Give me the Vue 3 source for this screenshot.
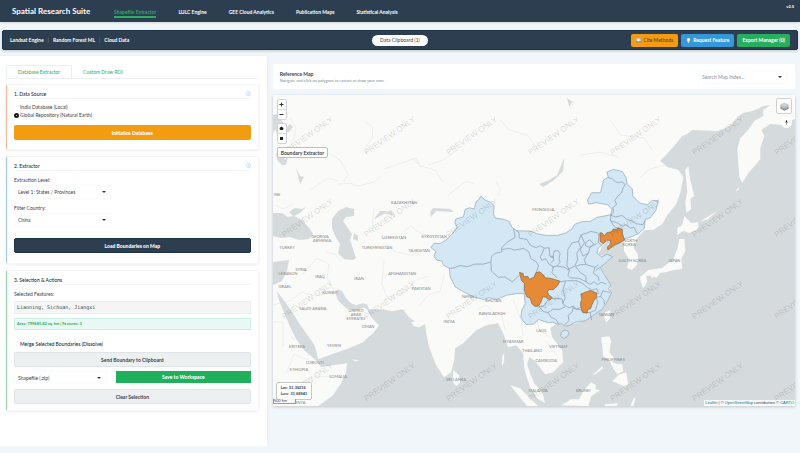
<script setup>
import { ref } from 'vue'

const navItems = ['Shapefile Extractor', 'LULC Engine', 'GEE Cloud Analytics', 'Publication Maps', 'Statistical Analysis']
const engines = ['Landsat Engine', 'Random Forest ML', 'Cloud Data']
const source = ref('global')
const merge = ref(false)

const marks = []
for (let row = 0; row < 4; row++) {
  for (let col = 0; col < 7; col++) {
    marks.push({ x: 309 + col * 82, y: 138 + row * 82 })
  }
}

const countries = [
  ['INE', 277, 196], ['KAZAKHSTAN', 404, 204], ['GEORGIA', 320, 238], ['ARMENIA', 322, 242],
  ['TURKEY', 287, 249], ['UZBEKISTAN', 394, 239], ['KYRGYZSTAN', 434, 238], ['TURKMENISTAN', 377, 249],
  ['TAJIKISTAN', 419, 252], ['SYRIA', 301, 271], ['LEBANON', 288, 275], ['IRAQ', 320, 278],
  ['IRAN', 359, 280], ['AFGHANISTAN', 402, 275], ['PAKISTAN', 421, 290], ['ISRAEL', 285, 288],
  ['KUWAIT', 330, 294], ['SAUDI ARABIA', 313, 310], ['UNITED', 356, 312], ['ARAB', 356, 316],
  ['EMIRATES', 356, 320], ['OMAN', 368, 328], ['YEMEN', 334, 347], ['ERITREA', 297, 348],
  ['DJIBOUTI', 315, 364], ['ETHIOPIA', 299, 371], ['SOMALIA', 338, 378], ['KENYA', 299, 404],
  ['INDIA', 449, 323], ['SRI LANKA', 456, 381], ['NEPAL', 468, 298], ['BHUTAN', 493, 302],
  ['BANGLADESH', 492, 315], ['MYANMAR', 513, 343], ['LAOS', 541, 332], ['THAILAND', 532, 352],
  ['VIETNAM', 558, 348], ['CAMBODIA', 546, 362], ['MALAYSIA', 538, 392], ['BRUNEI', 583, 392],
  ['PHILIPPINES', 613, 361], ['TAIWAN', 606, 316], ['MONGOLIA', 543, 211], ['NORTH', 630, 242],
  ['KOREA', 629, 246], ['SOUTH KOREA', 632, 262], ['JAPAN', 674, 262]
]
</script>

<template>
  <div class="page">
    <header class="nav">
      <h1>Spatial Research Suite</h1>
      <nav>
        <a v-for="(item, i) in navItems" :key="item" href="#" :class="{ active: i === 0 }">{{ item }}</a>
      </nav>
      <span class="version">v2.5</span>
    </header>

    <section class="toolbar">
      <div class="engines">
        <template v-for="(e, i) in engines" :key="e">
          <i v-if="i">|</i><span>{{ e }}</span>
        </template>
      </div>
      <button class="pill">Data Clipboard (1)</button>
      <div class="tools">
        <button class="btn cite">
          <svg viewBox="0 0 12 10"><path d="M0 1h5l1 1 1-1h5v8H7L6 10 5 9H0z" fill="#5b86a8" /><path d="M1 0h4l1 1v7L5 7H1zM11 0H7L6 1v7l1-1h4z" fill="#edf2f5" /><path d="M2 2h2M2 4h2M8 2h2M8 4h2" stroke="#9ab" /></svg>
          Cite Methods
        </button>
        <button class="btn request">
          <svg viewBox="0 0 10 12"><path d="M5 0a4 4 0 0 0-4 4c0 2 2 3 2 5h4c0-2 2-3 2-5a4 4 0 0 0-4-4z" fill="#fff3b0" /><path d="M3 9h4v2H6v1H4v-1H3z" fill="#dde3e8" /></svg>
          Request Feature
        </button>
        <button class="btn green">Export Manager (0)</button>
      </div>
    </section>

    <main>
      <aside>
        <div class="tabs">
          <button class="on">Database Extractor</button>
          <button>Custom Draw ROI</button>
        </div>

        <section class="card orange">
          <h2>1. Data Source
            <svg class="info" viewBox="0 0 10 10"><circle cx="5" cy="5" r="4" /><path d="M5 4.400v3M5 2.300v1" /></svg>
          </h2>
          <label class="check"><input v-model="source" type="radio" name="source" value="india">India Database (Local)</label>
          <label class="check"><input v-model="source" type="radio" name="source" value="global">Global Repository (Natural Earth)</label>
          <button class="wide init">Initialize Database</button>
        </section>

        <section class="card blue">
          <h2>2. Extractor
            <svg class="info" viewBox="0 0 10 10"><circle cx="5" cy="5" r="4" /><path d="M5 4.400v3M5 2.300v1" /></svg>
          </h2>
          <label class="field" for="level">Extraction Level:</label>
          <div class="select"><select id="level"><option>Level 1: States / Provinces</option></select></div>
          <label class="field" for="country">Filter Country:</label>
          <div class="select"><select id="country"><option>China</option></select></div>
          <button class="wide load">Load Boundaries on Map</button>
        </section>

        <section class="card mint">
          <h2>3. Selection &amp; Actions</h2>
          <div class="field">Selected Features:</div>
          <pre>Liaoning, Sichuan, Jiangxi</pre>
          <p class="area">Area: 799685.82 sq. km | Features: 3</p>
          <label class="check merge"><input v-model="merge" type="checkbox">Merge Selected Boundaries (Dissolve)</label>
          <button class="wide grey">Send Boundary to Clipboard</button>
          <div class="save-row">
            <div class="select"><select aria-label="Format"><option>Shapefile (.zip)</option></select></div>
            <button class="save">Save to Workspace</button>
          </div>
          <button class="wide grey clear">Clear Selection</button>
        </section>
      </aside>

      <section class="map-col">
        <div class="map-head">
          <div>
            <h3>Reference Map</h3>
            <p>Navigate and click on polygons to extract or draw your own.</p>
          </div>
          <div class="select search"><select aria-label="Map index"><option>Search Map Index...</option></select></div>
        </div>

        <div class="map">
          <svg class="canvas" viewBox="273 95 522 311">
            <rect x="273" y="95" width="522" height="311" fill="#fafaf9" />

            <g class="rivers">
              <path d="M365 121l8 7-1 10-7 10 2 6M320 155l9-2 11 7 8 14-4 8M338 184l12-1 8 3 16-4 7-6M384 169l12-4 20-7 4 7M428 165l15-5 14-10M411 158l10 8 14 4 8 12M566 99l8 3-4 7M290 118l6 10-3 12 8 7M275 205l8 4 10-5M500 120l8 9 20 7 10 14M610 120l10 15 24 3 8 12M580 155l20-3 18 5M640 177l10-8 14-4M448 195l18-14 8 3M496 181l4 8-2 7M310 190l18-12 10 3" />
              <path d="M273 305l18-5 11-8 14 4 20-5M302 275l15-17 12 6-2 14 8 14M327 252l8 2 6 8M384 260l-2 24 5 13 18-5 11-12 12-4M383 243l13 9 15 3 12-5M400 235l10-9 12 8 14 2M372 229l2-21M305 343l-14-6M273 322h10v24M286 373l8-19 20 8M298 385l12-8 20-1M420 305l8-10 12-4 4-16M452 278l16 12 18 5M478 309l8-4 8 8M505 330l-4-16M513 300l8 20 2 16M535 313l4 16 12 9M545 340l10 14" />
            </g>

            <path class="water" d="M318 406L333 395 341 383 346 372 347 363 333 365 321 367 316 360 304 350 299 343 293 333 286 317 279 300 277 291 283 299 291 310 299 323 309 337 314 344 316 350 318 359 329 355 349 348 363 342 367 338 373 333 379 325 371 317 367 309 364 307 356 311 346 308 338 300 335 292 338 289 342 291 346 298 351 303 356 305 362 303 367 304 369 309 383 309 392 311 403 309 409 317 415 321 411 322 414 326 419 327 425 324 426 332 429 347 436 365 444 377 451 372 454 360 455 348 463 343 470 336 476 330 486 325 498 323 503 333 508 347 516 345 523 353 524 367 526 375 530 387 537 398 545 403 542 392 534 383 530 373 527 364 529 357 534 360 538 365 545 374 553 372 563 362 562 350 552 337 550 328 557 323 565 325 580 322 593 315 603 307 610 294 610 286 605 275 600 267 612 257 598 255 602 246 608 240 608 250 623 238 624 247 630 257 627 268 634 268 638 260 637 253 633 248 637 238 644 230 653 230 662 224 667 215 676 204 680 193 683 177 678 170 667 167 660 161 673 147 682 136 687 134 692 130 717 131 730 126 737 117 743 113 752 111 757 109 763 106 770 105 763 110 763 116 754 121 747 131 740 138 737 149 738 163 739 177 742 183 748 173 757 163 760 159 760 148 764 136 761 130 770 124 783 125 788 121 795 119 795 406Z" />
            <g class="water">
              <path d="M273 213l9 0 6 4 5-1-4-4 6-4 7 1 4-2-6 6-6 3 8 4 8 9 3 5-4 5-10 1-9-3-9 1-8-2z" />
              <path d="M332 219l6-8 8-4 8 2 0 7-8 1-3 4 6 9 3 4-2 6 3 9 3 9-3 2-9-1-6-6 2-9-5-8-3-8z" />
              <path d="M354 233l4 3 0 5-5-2zM273 262l16-2-2 11-5 10-9 4zM273 115l5-1 8 14 4-4 3 3-4 5-6 1 1 8-5-2-4-10-4 8zM276 153l8 1 0 6 4-3-2 8-4 0-5-5zM430 212l3-4 18 1 2 3-17-1-5 6zM539 184l10-4 8-5 7-17-1 13-9 9-11 7zM374 219l6-8 8 0-8 5zM567 98l5 4-3 5z" />
              <path d="M296 168l4 8 4 1-4 7zM384 214l10 1-3-5z" />
            </g>

            <g class="land">
              <path d="M453 370l6 5 1 7-4 4-3-4zM510 385l10 3 9 9 9 9h-11l-9-11zM561 405l10-6 8 0 4-8 8-9 5 3-1 4 5 1-9 6-3 10zM601 337l8-1 2 5-2 11 6 7-4 2-8-5-1-10zM609 360l8 4 5 0 1 7-6 3-4-6-2-4zM612 381l7-7 7-2 2 12-4 2-7-3zM602 366l-10 9 3-1 8-6zM605 312l5-2 0 8-4 4-2-4zM605 404l13-1-2 3h-12zM630 406l4-9 1 2-2 7zM502 356l2-3 0 9-2 4zM352 359l7 1-4 1z" />
              <path d="M685 170l3-4 2 14 4 16-4 3 1 10-5 4-1-11 2-10zM684 216l7 7 7-1 0 7-9 4-6-2-6 4 0-7 5-3zM679 239l5 0 1 12-4 8 1 10-8 1-8 2-6 1-4 5-4-3-12 2 8-7 14-2 6-5 5-3 4-11zM650 275l6-1-4 4zM640 276l6-1 1 7-4 6-3-8zM699 222l8-5 10-6-9 8zM735 191l4-4-1 3z" />
            </g>

            <g class="land" transform="translate(420 160) scale(.3333)">
              <path d="M612 240l35 0-8 22 15 25-4 28-15 15-14-6 6-25-16-28z" />
            </g>
            <g class="china" transform="translate(420 160) scale(.3333)">
              <path class="province" d="M32 262L42 250 61 250 80 238 98 220 111 202 104 187 107 177 130 170 135 148 148 143 162 147 168 125 176 119 182 108 195 120 214 128 222 138 220 162 226 174 252 178 267 184 276 202 290 212 331 213 350 221 378 226 412 226 436 219 455 207 463 193 488 184 510 184 530 172 572 164 575 148 562 134 545 131 530 128 505 132 502 120 514 98 541 98 550 60 564 51 560 36 580 28 607 35 618 54 621 72 636 86 638 108 658 129 682 134 696 121 714 122 707 151 689 174 675 178 672 205 655 220 639 228 612 237 600 248 585 255 563 269 570 252 559 243 548 252 535 263 530 279 545 291 560 282 577 290 560 305 540 322 552 343 572 375 565 385 574 398 558 430 545 448 520 465 495 482 465 486 450 495 435 498 425 491 410 492 398 486 385 488 355 478 340 492 318 493 307 480 302 470 305 450 315 430 312 400 290 400 275 403 260 405 230 418 205 413 190 418 160 410 130 395 105 380 90 350 88 325 70 315 65 303 50 300 42 290 47 274Z" />
              <path class="province" d="M432 510l9 1 6 8-7 12-11 4-8-8 3-11z" />
              <path class="border" d="M280 205L285 232 260 247 244 264 246 275 224 280 214 290 212 306 190 312 165 312 140 320 120 316 103 323 88 325M212 306L214 333 235 352 254 350 276 365 299 345M246 268L268 265 284 270 310 265 326 275 332 295 350 307 355 317 349 336M287 211L297 218 297 234 320 238 330 255 348 263 359 257 372 264 366 280 360 290 365 301 377 296 386 312 400 320 395 338 411 353M372 264L387 263 389 288 399 289 401 301 391 308M396 321L410 318 420 306 416 295 420 281 413 271 402 273 398 292 390 291M410 318L432 321 448 331 440 316 442 292 443 268 456 248 475 244 483 224 500 219 512 214 531 218 536 225 534 247 545 255M475 244L481 262 470 279 472 298 464 318 442 329M531 250L510 260 505 279 488 288 480 268 493 248 482 224M498 246L508 239 521 252 508 262 495 256ZM505 279L492 298 497 313 524 322 535 314M497 313L480 314 466 319 481 338 497 348 498 365 510 373 521 365 532 374 542 366 558 372M524 322L520 339 535 350 536 362M540 322L527 330M448 331L443 346 451 353 478 355 489 361 498 365M418 365L442 362 470 362 487 370 503 383 515 390 530 386M436 364L428 390 435 414 427 430M395 415L425 416 430 434 447 443 460 438 468 448 484 441M384 418L371 438 357 440 370 455 384 457 398 447 416 448 435 440M384 457L392 471 407 478 416 492M460 438L456 456 444 465 446 482 434 494M460 445L484 449 488 458 510 457 514 480M510 457L526 450 533 425 527 412 541 409 548 392 569 397M541 409L552 421 552 433M531 386L535 402M572 162L571 182 590 188 608 198 617 194 630 204 641 202 651 220M571 165L586 171 605 166 619 177 638 184 648 191 668 194 674 182M563 52L577 57 588 67 605 66 615 73 609 84 603 99 591 110 584 121 589 133 578 143 580 157 571 165M571 182L582 199 593 205" />
              <path class="selected" d="M298 337L309 340 310 350 323 349 328 358 342 351 347 338 358 335 370 345 375 353 393 355 419 363 412 377 399 389 387 388 382 394 385 404 396 412 389 420 375 411 367 410 364 423 355 438 345 439 335 431 330 414 320 410 312 390 313 370 304 361Z" />
              <path class="selected" d="M482 402L494 397 502 394 510 391 522 396 530 399 528 413 520 423 514 437 511 446 502 448 501 459 487 456 482 440 481 428 485 418Z" />
              <path class="selected" d="M539 218L546 219 552 228 560 218 574 215 579 207 590 209 593 203 606 208 607 222 613 239 596 249 585 253 563 269 562 261 572 250 570 241 560 240 550 250 540 244Z" />
            </g>
            <text v-for="c in countries" :key="c[0]" class="country" :x="c[1]" :y="c[2]">{{ c[0] }}</text>
            <text v-for="(m, i) in marks" :key="i" class="mark" :transform="`translate(${m.x} ${m.y}) rotate(-35)`">PREVIEW ONLY</text>
          </svg>

          <div class="controls">
            <div class="stack">
              <button aria-label="Zoom in"><svg viewBox="0 0 10 10"><path d="M5 1v8M1 5h8" stroke="#333" stroke-width="2" /></svg></button>
              <button aria-label="Zoom out"><svg viewBox="0 0 10 10"><path d="M1 5h8" stroke="#333" stroke-width="2" /></svg></button>
            </div>
            <div class="stack">
              <button aria-label="Draw polygon"><svg viewBox="0 0 10 10"><path d="M5 1l4 3-1 4H2L1 4z" fill="#222" /></svg></button>
              <button aria-label="Draw rectangle"><svg viewBox="0 0 10 10"><path d="M2 2h6v6H2z" fill="#222" /></svg></button>
            </div>
            <button class="tag">Boundary Extractor</button>
          </div>
          <div class="corner">
            <button class="layers" aria-label="Layers"><svg viewBox="0 0 26 26"><path d="M1 16l12 6 12-6v3l-12 6-12-6z" fill="#777" /><path d="M1 12l12 6 12-6v4l-12 6-12-6z" fill="#999" /><path d="M1 8l12-6 12 6v4l-12 6-12-6z" fill="#b8b8b8" /><path d="M1 8l12-6 12 6-12 6z" fill="#d0d0d0" /></svg></button>
            <div class="compass"><svg viewBox="0 0 10 10"><path d="M5 1l1.500 4h-3z" fill="#222" /><path d="M5 9L3.500 5h3z" fill="#999" /></svg></div>
          </div>
          <div class="coords">Lat: 51.36216<br>Lon: 31.68941</div>
          <div class="scale">500 km</div>
          <div class="credit"><a href="#">Leaflet</a> | © <a href="#">OpenStreetMap</a> contributors © <a href="#">CARTO</a></div>
        </div>
      </section>
    </main>
  </div>
</template>

<style>
body {
  background: #f1f6fa;
}
</style>

<style scoped>
* {
  box-sizing: border-box;
}
.page {
  font-family: Lato, "Liberation Sans", sans-serif;
  font-size: 5px;
  line-height: 8px;
  color: #3b4248;
}
h1, h2, h3, p, pre {
  margin: 0;
}
button, select, input {
  font: inherit;
  color: inherit;
  margin: 0;
  padding: 0;
  border: 0;
  background: none;
}
svg {
  display: block;
}
.nav {
  display: flex;
  align-items: center;
  height: 22px;
  padding: 0 6px 0 12px;
  background: #2c3e50;
  color: #fff;
  box-shadow: 0 1px 2px #0002;
}
h1 {
  font-size: 8px;
  font-weight: 700;
  flex: 0 0 102px;
}
nav {
  display: flex;
  flex: 1;
  gap: 22px;
}
nav a {
  color: #fff;
  font-weight: 700;
  text-decoration: none;
  padding-top: 3px;
  border-bottom: 2px solid transparent;
}
nav a.active {
  color: #27ae60;
  border-color: #27ae60;
}
.version {
  font-size: 4px;
  font-weight: 900;
  align-self: flex-start;
  padding-top: 3px;
}
.toolbar {
  display: grid;
  grid-template-columns: 1fr auto 1fr;
  align-items: center;
  height: 20px;
  margin: 8px 2px 6px;
  padding: 0 7px;
  border: 1px solid #1d3347;
  border-radius: 2px;
  background: #2c3e50;
  color: #fff;
  box-shadow: 0 1px 3px #0003;
}
.engines {
  display: flex;
  gap: 4px;
  font-weight: 700;
}
.engines i {
  font-style: normal;
  font-weight: 400;
  color: #8795a3;
}
.pill {
  height: 11px;
  padding: 0 8px;
  border-radius: 6px;
  background: #fff;
  color: #3b4248;
}
.tools {
  display: flex;
  justify-content: flex-end;
  gap: 3px;
}
.btn {
  display: flex;
  align-items: center;
  justify-content: center;
  gap: 2px;
  height: 13px;
  padding: 0 5px;
  border-radius: 2px;
  font-weight: 700;
}
.btn svg {
  width: 5px;
  height: 5px;
}
.cite {
  background: #f39c12;
  color: #4b4230;
  font-weight: 400;
}
.request {
  background: #3498db;
}
.green {
  background: #27ae60;
}
main {
  display: grid;
  grid-template-columns: 1fr 2fr;
  align-items: start;
}
aside {
  background: #fff;
  padding: 9px 8px 35px 6px;
  box-shadow: 1px 0 3px #0000000a;
}
.tabs {
  display: flex;
  margin: 0 2px 5px 0;
  border-bottom: 1px solid #eceff1;
}
.tabs button {
  height: 13px;
  padding: 0 11px;
  color: #27ae60;
}
.tabs .on {
  border: 1px solid #eceff1;
  border-bottom: 0;
  border-radius: 2px 2px 0 0;
}
.card {
  padding: 4px 7px 9px;
  border: 1px solid #f3f5f6;
  border-left: 1px solid;
  border-radius: 2px;
  box-shadow: 0 1px 3px #0001;
  margin-bottom: 6px;
}
.card.orange {
  border-left-color: #f8b787;
}
.card.blue {
  border-left-color: #9cc9ee;
  padding-bottom: 10px;
}
.card.mint {
  border-left-color: #8fd5ab;
  margin-bottom: 0;
  padding-bottom: 6px;
}
h2 {
  display: flex;
  justify-content: space-between;
  align-items: center;
  font-size: 5px;
  font-weight: 500;
  color: #23292e;
  height: 10px;
  border-bottom: 1px solid #f3f5f6;
  margin-bottom: 4px;
}
.info {
  width: 5px;
  height: 5px;
  fill: none;
  stroke: #8fc1e8;
}
.check {
  display: flex;
  align-items: center;
  gap: 1px;
}
.check input {
  appearance: none;
  width: 5px;
  height: 5px;
  border-radius: 50%;
}
.check input:checked {
  border: 2px solid #1a1a1a;
}
.wide {
  display: block;
  width: 100%;
  height: 15px;
  border-radius: 2px;
  font-weight: 900;
}
.init {
  margin-top: 6px;
  background: #f39c12;
  color: #fff;
}
.load {
  margin-top: 11px;
  border: 1px solid #1d3347;
  background: #2c3e50;
  color: #fff;
}
.field {
  display: block;
  line-height: 10px;
}
.select {
  position: relative;
  width: 98px;
  border: 1px solid #fafbfb;
  margin-bottom: 4px;
}
.select select {
  display: block;
  appearance: none;
  width: 100%;
  height: 12px;
  padding: 0 3px;
}
.select::after {
  content: "";
  position: absolute;
  right: 5px;
  top: 5px;
  border: 2px solid transparent;
  border-top-color: #333;
  border-bottom: 0;
  pointer-events: none;
}
pre {
  font: 5px/11px "DejaVu Sans Mono", monospace;
  height: 13px;
  margin-top: 2px;
  padding: 0 2px;
  border: 1px solid #eceeef;
  background: #f5f5f5;
}
.area {
  margin: 4px 0 10px;
  height: 12px;
  padding: 0 2px;
  border: 1px solid #cdeee3;
  background: #e8f8f5;
  color: #27ae60;
  font-size: 4px;
  line-height: 10px;
  font-weight: 700;
}
.merge {
  margin-bottom: 4px;
  font-weight: 500;
  color: #23292e;
}
.grey {
  border: 1px solid #dfe4e6;
  background: #ecf0f1;
  font-weight: 700;
}
.save-row {
  display: grid;
  grid-template-columns: 93px 1fr;
  gap: 9px;
  margin: 4px 0 6px;
}
.save-row .select {
  width: auto;
  margin: 0;
  height: 12px;
}
.save {
  height: 12px;
  background: #20b05b;
  color: #fff;
  font-weight: 900;
}
.map-col {
  padding: 8px 5px 0 6px;
}
.map-head {
  display: flex;
  justify-content: space-between;
  align-items: center;
  height: 25px;
  margin-bottom: 6px;
  padding: 0 7px;
  border-radius: 2px;
  background: #fff;
}
h3 {
  font-size: 5px;
  font-weight: 700;
  line-height: 8px;
}
.map-head p {
  font-size: 4px;
  line-height: 6px;
  color: #7f8a92;
}
.search {
  width: 90px;
  margin: 0;
  color: #8a9196;
}
.map {
  position: relative;
  box-shadow: 0 1px 3px #0003;
}
.canvas {
  width: 100%;
}
.water {
  fill: #d5dadc;
}
.land {
  fill: #fafaf9;
}
.rivers {
  fill: none;
  stroke: #e4e4e4;
  stroke-width: .6;
}
.province {
  fill: #d3e7f5;
  stroke: #8ba4b7;
  stroke-width: 2;
}
.border {
  fill: none;
  stroke: #8099ad;
  stroke-width: 2;
}
.selected {
  fill: #e68a35;
  stroke: #7b6249;
  stroke-width: 2;
}
.country {
  font-size: 4px;
  fill: #85898c;
  text-anchor: middle;
}
.mark {
  font-family: "Liberation Sans", sans-serif;
  font-size: 8px;
  fill: #000;
  fill-opacity: .16;
  text-anchor: middle;
}
.controls {
  position: absolute;
  left: 4px;
  top: 4px;
}
.stack {
  width: 10px;
  margin-bottom: 3px;
  border: 1px solid #d0d2d3;
  border-radius: 2px;
  background: #fff;
}
.stack button {
  display: grid;
  place-items: center;
  width: 8px;
  height: 9px;
}
.stack button + button {
  height: 10px;
  border-top: 1px solid #ddd;
}
.stack svg {
  width: 5px;
  height: 5px;
}
.tag {
  height: 11px;
  padding: 0 3px;
  border: 1px solid #bcbfc1;
  border-radius: 2px;
  background: #fff;
  font-weight: 700;
}
.corner {
  position: absolute;
  right: 3px;
  top: 3px;
  display: flex;
  flex-direction: column;
  align-items: flex-end;
  gap: 3px;
}
.layers {
  display: grid;
  place-items: center;
  width: 16px;
  height: 16px;
  border: 1px solid #cfd1d2;
  border-radius: 2px;
  background: #fff;
}
.layers svg {
  width: 9px;
  height: 9px;
}
.compass {
  display: grid;
  place-items: center;
  width: 11px;
  height: 11px;
  border-radius: 50%;
  background: #fff;
}
.compass svg {
  width: 7px;
  height: 7px;
}
.coords {
  position: absolute;
  left: 3px;
  bottom: 6px;
  padding: 2px 4px;
  border: 1px solid #c5c8ca;
  border-radius: 2px;
  background: #fff;
  font: 700 4px/6px "Liberation Sans", sans-serif;
}
.scale {
  position: absolute;
  left: 0;
  bottom: 2px;
  width: 23px;
  border: 1px solid #999;
  border-top: 0;
  background: #fffc;
  font-size: 4px;
  line-height: 4px;
}
.credit {
  position: absolute;
  right: 0;
  bottom: 0;
  padding: 0 1px;
  background: #fffc;
  font: 4px/6px "Liberation Sans", sans-serif;
}
.credit a {
  color: #0078a8;
  text-decoration: none;
}
</style>
